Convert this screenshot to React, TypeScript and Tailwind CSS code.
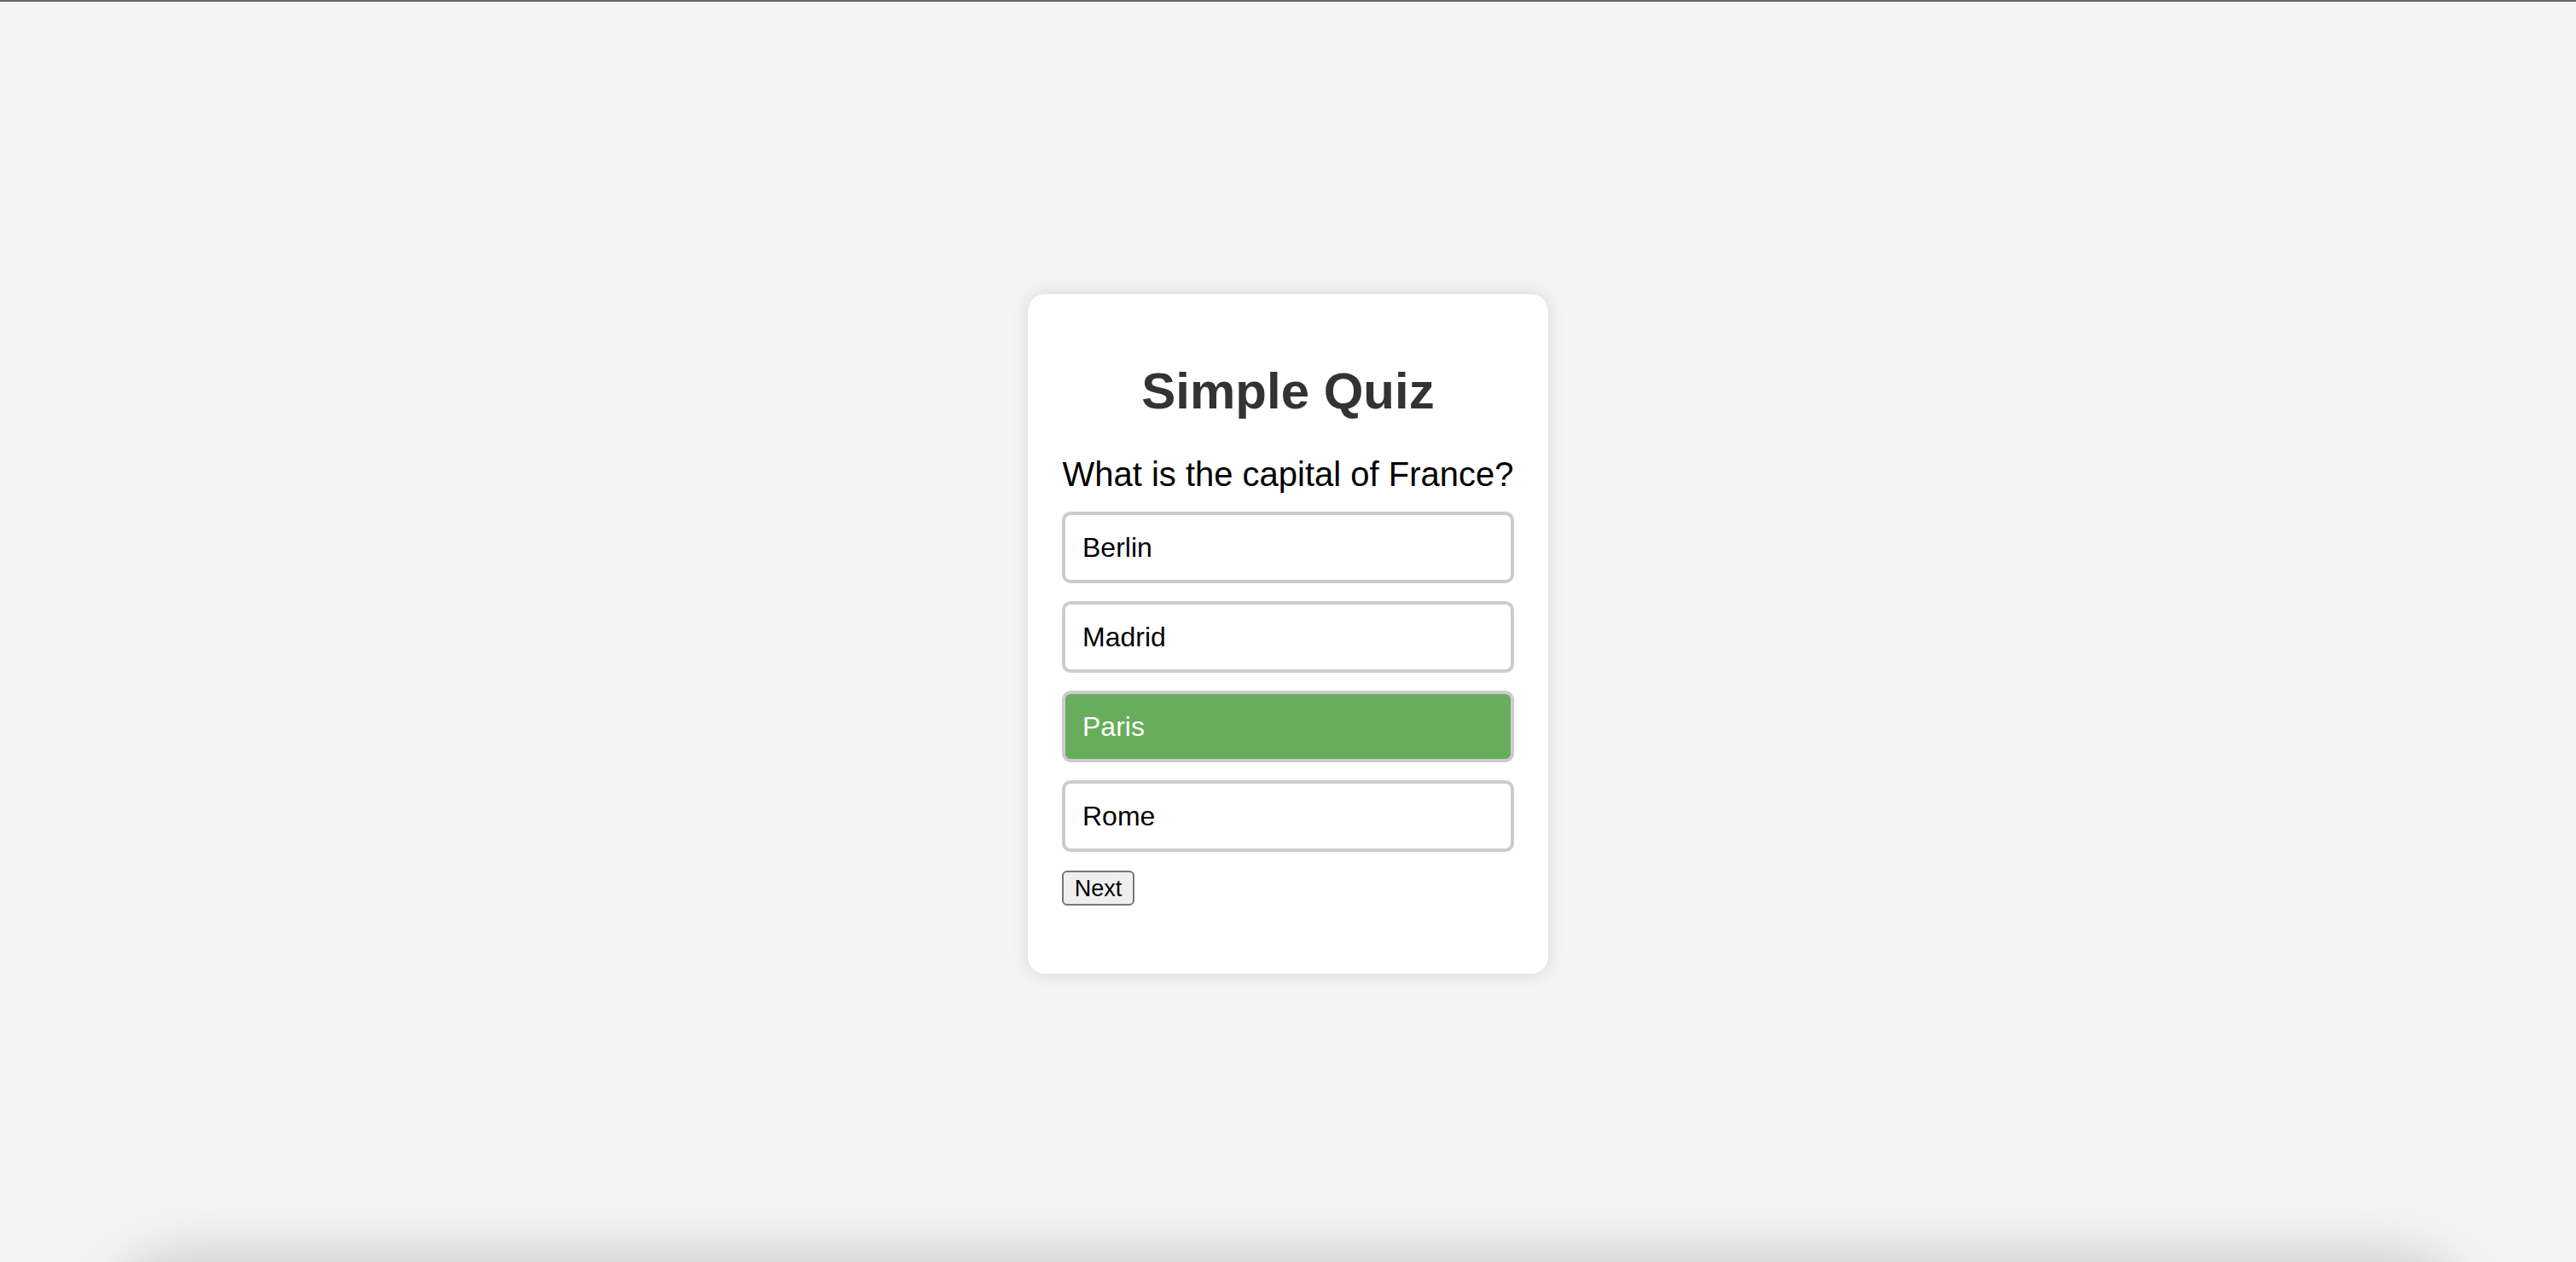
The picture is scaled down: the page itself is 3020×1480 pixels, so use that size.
import { useState } from "react"

const options = ["Berlin", "Madrid", "Paris", "Rome"]

export default function App() {
  const [selected, setSelected] = useState("Paris")

  return (
    <div
      className="relative h-[1480px] w-full overflow-hidden bg-[#f4f4f4]"
      style={{ fontFamily: '"Liberation Sans", Arial, sans-serif' }}
    >
      {/* top window edge */}
      <div className="h-[2px] w-full bg-[#646268]"></div>

      <div className="flex justify-center pt-[343px]">
        <div className="w-[610px] rounded-[20px] bg-white px-[40px] pt-[40px] pb-[80px] text-center shadow-[0_0_20px_rgba(0,0,0,0.13)]">
          <h1 className="mt-[39px] text-[60px] leading-[69px] font-bold text-[#333]">Simple Quiz</h1>
          <p className="mt-[40px] text-[40px] leading-[46px] text-black">What is the capital of France?</p>

          <div className="mt-[21px] flex flex-col gap-[21px]">
            {options.map((o) => (
              <button
                key={o}
                onClick={() => setSelected(o)}
                className={
                  o === selected
                    ? "h-[84px] w-full rounded-[10px] border-[4px] border-[#cccccc] bg-[#67ad5b] px-[20px] text-left text-[32px] leading-[36px] text-white"
                    : "h-[84px] w-full rounded-[10px] border-[4px] border-[#cccccc] bg-white px-[20px] text-left text-[32px] leading-[36px] text-black"
                }
              >
                {o}
              </button>
            ))}
          </div>

          <div className="mt-[22px] flex">
            <button className="flex h-[41px] w-[85px] items-center justify-center rounded-[6px] border-[2px] border-[#767676] bg-[#efefef] text-[27px] leading-[30px] text-black">
              Next
            </button>
          </div>
        </div>
      </div>

      {/* shadow of the window below */}
      <div className="absolute top-[1500px] right-[150px] left-[150px] h-[200px] rounded-[60px] bg-[#f4f4f4] shadow-[0_0_70px_20px_rgba(0,0,0,0.22)]"></div>
    </div>
  )
}
